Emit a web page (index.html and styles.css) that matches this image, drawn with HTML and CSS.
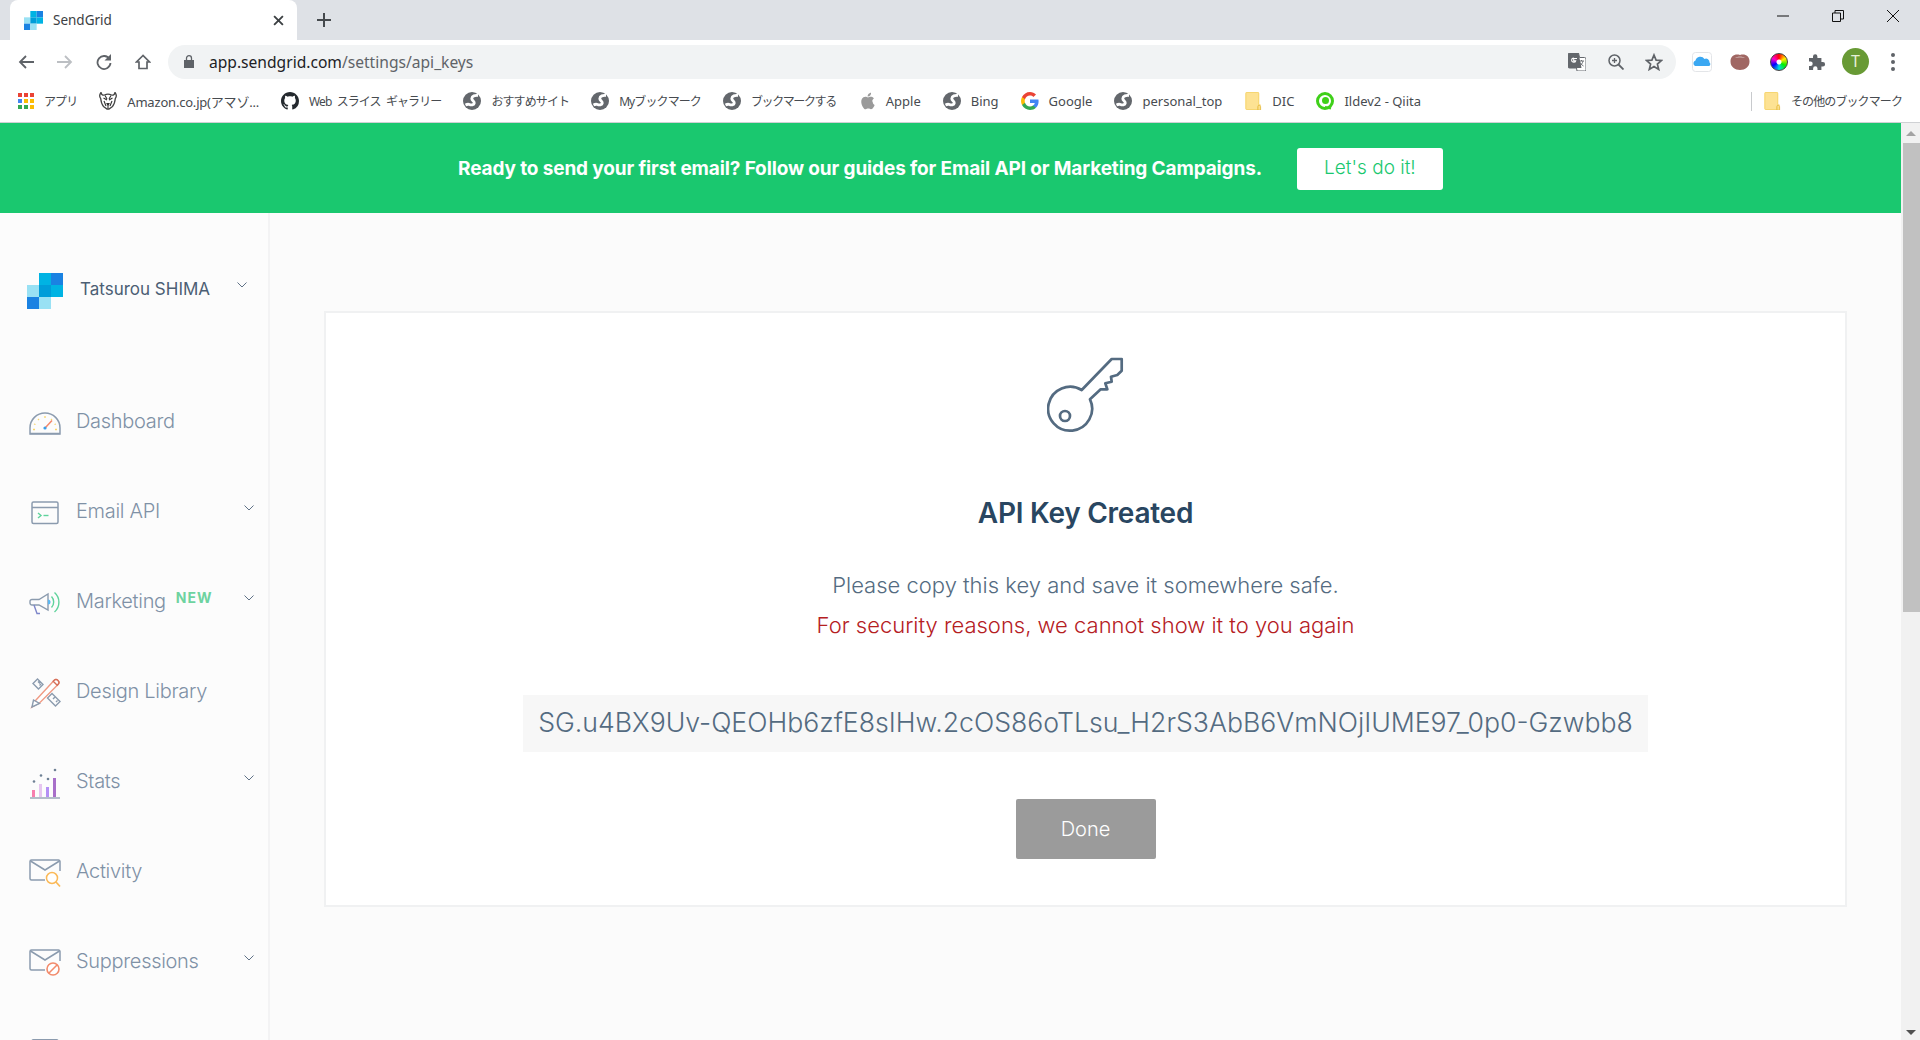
FILE: index.html
```html
<!DOCTYPE html>
<html lang="en">
<head>
    <meta charset="UTF-8">
    <title>SendGrid</title>
    <link rel="stylesheet" href="styles.css">
</head>
<body>
    <svg class="defs" width="0" height="0">
        <symbol id="globe" viewBox="0 0 18 18">
            <circle cx="9" cy="9" r="9" fill="#63676c"/>
            <path d="M15 3.500c-3-.5-6 .5-6.200 3-.2 2.200 2.700 2.500 2.500 4.500-.2 2-3.300 2.200-4.800 1.500-1.200-.5-2.500-.3-4 .5" fill="none" stroke="#fff" stroke-width="2.800"/>
        </symbol>
        <symbol id="folder" viewBox="0 0 16 19">
            <path d="M1.500 0h11.500a1.500 1.500 0 0 1 1.500 1.500V13H16v4.500a1.500 1.500 0 0 1-1.500 1.500h-13A1.500 1.500 0 0 1 0 17.500v-16A1.500 1.500 0 0 1 1.500 0z" fill="#fde293"/>
            <path d="M.5 1.500a1 1 0 0 1 1-1H13a1 1 0 0 1 1 1v16a1 1 0 0 1-1 1H1.500a1 1 0 0 1-1-1z" fill="none" stroke="#f6d56f"/>
            <path d="M13 15.500a1.500 1.500 0 0 1 3 0V19h-3z" fill="none" stroke="#e8c04c" stroke-width="1"/>
        </symbol>
        <symbol id="chev" viewBox="0 0 10 6">
            <path d="M.5.5 5 5 9.500.5" fill="none" stroke="#5f7186" stroke-width="1"/>
        </symbol>
    </svg>

    <div class="tab-strip">
        <div class="tab">
            <svg class="favicon" viewBox="0 0 3 3">
                <rect x="1" width="1" height="1" fill="#00b3e3"/>
                <rect x="2" width="1" height="1" fill="#1a82e2"/>
                <rect y="1" width="1" height="1" fill="#99e1f4"/>
                <rect x="1" y="1" width="1" height="1" fill="#009dd9"/>
                <rect x="2" y="1" width="1" height="1" fill="#00b3e3"/>
                <rect y="2" width="1" height="1" fill="#1a82e2"/>
                <rect x="1" y="2" width="1" height="1" fill="#99e1f4"/>
            </svg>
            <span class="tab-title">SendGrid</span>
            <svg class="tab-close" viewBox="0 0 10 10"><path d="M1 1l8 8M9 1l-8 8" stroke="#3c4043" stroke-width="1.700"/></svg>
        </div>
        <svg class="new-tab" viewBox="0 0 14 14"><path d="M7 0v14M0 7h14" stroke="#45494d" stroke-width="2"/></svg>
        <div class="window-controls">
            <svg viewBox="0 0 12 12"><path d="M0 6h12" stroke="#111" stroke-width="1"/></svg>
            <svg viewBox="0 0 12 12"><path d="M.5 3h8v8.500h-8zM3 3V.5h8.500V9H8.500" fill="none" stroke="#111" stroke-width="1"/></svg>
            <svg viewBox="0 0 12 12"><path d="M0 0l12 12M12 0L0 12" stroke="#111" stroke-width="1"/></svg>
        </div>
    </div>

    <div class="toolbar">
        <div class="nav-buttons">
            <svg viewBox="0 0 16 16"><path d="M16 8H2M8 2L2 8l6 6" fill="none" stroke="#5f6368" stroke-width="1.800"/></svg>
            <svg viewBox="0 0 16 16"><path d="M0 8h14M8 2l6 6-6 6" fill="none" stroke="#bcbfc3" stroke-width="1.800"/></svg>
            <svg viewBox="0 0 16 16"><path d="M13.500 5A6.500 6.500 0 1 0 14.500 9" fill="none" stroke="#5f6368" stroke-width="1.800"/><path d="M15 0v6.500H8.500z" fill="#5f6368"/></svg>
            <svg viewBox="0 0 16 16"><path d="M8 1.500L1.500 8H4v6.500h8V8h2.500z" fill="none" stroke="#5f6368" stroke-width="1.700"/></svg>
        </div>
        <div class="omnibox">
            <svg class="lock" viewBox="0 0 10 13"><path d="M0 5h10v8H0z" fill="#5f6368"/><path d="M2.500 5V3.200a2.500 2.500 0 0 1 5 0V5" fill="none" stroke="#5f6368" stroke-width="1.300"/></svg>
            <span class="url"><span class="url-host">app.sendgrid.com</span>/settings/api_keys</span>
            <svg class="omni-icon omni-translate" viewBox="0 0 18 18">
                <path d="M1.500 0h9l1 4.500H16.500A1.500 1.500 0 0 1 18 6v10.500a1.500 1.500 0 0 1-1.500 1.500H9L8.500 15h-7A1.500 1.500 0 0 1 0 13.500v-12A1.500 1.500 0 0 1 1.500 0z" fill="#fff" stroke="#63676c"/>
                <path d="M1.500 0h9L13.500 15H1.500A1.500 1.500 0 0 1 0 13.500v-12A1.500 1.500 0 0 1 1.500 0z" fill="#63676c"/>
                <path d="M9 5.500H5.700v2.400h2c-.2 1-1 1.400-1.900 1.400a2 2 0 0 1 0-4.300" fill="none" stroke="#fff" stroke-width="1.100"/>
                <path d="M11 8h5M13.500 7v1M15 8c-.5 2.500-2 4-3.500 5M12 9.500c.8 1.500 2 2.800 3.500 3.500" fill="none" stroke="#63676c" stroke-width=".9"/>
            </svg>
            <svg class="omni-icon omni-zoom" viewBox="0 0 16 16"><circle cx="6.500" cy="6.500" r="5.500" fill="none" stroke="#5f6368" stroke-width="1.500"/><path d="M10.500 10.500L15.500 15.500" stroke="#5f6368" stroke-width="1.800"/><path d="M6.500 4v5M4 6.500h5" stroke="#5f6368" stroke-width="1.300"/></svg>
            <svg class="omni-icon omni-star" viewBox="0 0 18 18"><path d="M9 2l2.100 5.100 5.400.4-4.100 3.600 1.300 5.300L9 13.500l-4.700 2.900 1.300-5.300L1.500 7.500l5.400-.4z" fill="none" stroke="#5f6368" stroke-width="1.700"/></svg>
        </div>
        <div class="ext-icons">
            <svg viewBox="0 0 20 20" class="ext-cloud"><rect x=".5" y=".5" width="19" height="19" rx="3" fill="#fff" stroke="#e3e5e8"/><path d="M3 14a3 3 0 0 1 .5-5.500A5 5 0 0 1 12.500 7a3.500 3.500 0 0 1 5 3.500A2 2 0 0 1 17 14z" fill="#3ba8f2"/></svg>
            <svg viewBox="0 0 20 18" class="ext-tomato"><path d="M10 2c5-1.500 9.500 1 9.500 6.500S15 17 10 17 .5 14 .5 8.500 5 .5 10 2z" fill="#a06763"/><path d="M5 5c3-2 7-2 10 0-3-.8-7-.8-10 0z" fill="#cdb0ad"/></svg>
            <div class="ext-wheel"></div>
            <svg viewBox="0 0 18 18" class="ext-puzzle"><path d="M1 5h4V3.500a2.200 2.200 0 0 1 4.400 0V5h4v4h1.500a2.200 2.200 0 0 1 0 4.400h-1.500V17H9.500v-1.500a2.200 2.200 0 0 0-4.400 0V17H1v-4h1.500a2.200 2.200 0 0 0 0-4.400H1z" fill="#5f6368"/></svg>
            <div class="avatar">T</div>
            <div class="kebab"><i></i><i></i><i></i></div>
        </div>
    </div>

    <div class="bookmarks">
        <div class="bm bm-ja">
            <svg class="bm-icon-apps" viewBox="0 0 16 16">
                <rect width="4" height="4" fill="#ea4335"/><rect x="6" width="4" height="4" fill="#ea4335"/><rect x="12" width="4" height="4" fill="#ea4335"/>
                <rect y="6" width="4" height="4" fill="#4285f4"/><rect x="6" y="6" width="4" height="4" fill="#fbbc04"/><rect x="12" y="6" width="4" height="4" fill="#fbbc04"/>
                <rect y="12" width="4" height="4" fill="#34a853"/><rect x="6" y="12" width="4" height="4" fill="#34a853"/><rect x="12" y="12" width="4" height="4" fill="#fbbc04"/>
            </svg>
            <span>アプリ</span>
        </div>
        <div class="bm bm-latin bm-amazon">
            <svg class="bm-icon" viewBox="0 0 18 18"><path d="M2 .5c.5 2.500 2 3 3.500 2.500 2-1 5-1 7 0 1.500.5 3 0 3.500-2.500 1.500 2 1.500 4.500.3 6-.3 3-1 6-2.800 8L10 17H8l-3.500-2.500C2.700 12.500 2 9.500 1.700 6.500.5 5 .5 2.500 2 .5z" fill="#fff" stroke="#444" stroke-width="1.300"/><path d="M4.500 6l3.500 2M13.500 6L10 8M8 11.500h2l-1 2zM9 13.500v3M6 3.500l2 3.500M12 3.500L10 7M5 9l2 5M13 9l-2 5" stroke="#333" fill="none" stroke-width="1.100"/></svg>
            <span>Amazon.co.jp(アマゾ...</span>
        </div>
        <div class="bm bm-ja bm-spaced">
            <svg class="bm-icon" viewBox="0 0 16 16"><path fill="#24292e" d="M8 0C3.580 0 0 3.580 0 8c0 3.540 2.290 6.530 5.470 7.590.4.070.55-.17.55-.38 0-.19-.01-.82-.01-1.490-2.010.37-2.530-.49-2.690-.94-.09-.23-.48-.94-.82-1.130-.28-.15-.68-.52-.01-.53.630-.01 1.080.58 1.230.82.720 1.210 1.870.87 2.330.66.070-.52.280-.87.510-1.070-1.780-.2-3.640-.89-3.640-3.950 0-.87.310-1.590.820-2.150-.08-.2-.36-1.020.08-2.120 0 0 .67-.21 2.200.820.640-.18 1.320-.27 2-.27s1.360.09 2 .27c1.530-1.040 2.200-.82 2.200-.82.440 1.100.160 1.920.08 2.120.510.560.820 1.270.820 2.150 0 3.070-1.870 3.750-3.650 3.950.290.250.540.730.540 1.480 0 1.070-.01 1.930-.01 2.200 0 .210.150.460.550.380A8.010 8.010 0 0 0 16 8c0-4.420-3.580-8-8-8z"/></svg>
            <span>Web スライス ギャラリー</span>
        </div>
        <div class="bm bm-ja"><svg class="bm-icon"><use href="#globe"/></svg><span>おすすめサイト</span></div>
        <div class="bm bm-ja"><svg class="bm-icon"><use href="#globe"/></svg><span>Myブックマーク</span></div>
        <div class="bm bm-ja bm-tight"><svg class="bm-icon"><use href="#globe"/></svg><span>ブックマークする</span></div>
        <div class="bm bm-latin">
            <svg class="bm-icon" viewBox="0 0 16 18"><path fill="#9a9a9a" d="M13.200 9.500c0-2 1.600-3 1.700-3.100-1-1.400-2.400-1.600-2.900-1.600-1.200-.1-2.400.7-3 .7s-1.600-.7-2.600-.7C5 4.800 3.700 5.600 3 6.800c-1.500 2.500-.4 6.300 1 8.400.7 1 1.500 2.100 2.600 2.100 1 0 1.400-.7 2.700-.7s1.600.7 2.700.7 1.800-1 2.500-2c.8-1.200 1.100-2.300 1.100-2.400 0 0-1.900-.8-2-3.400zM11.200 3.400C11.800 2.700 12.200 1.700 12 .7c-.8 0-1.900.6-2.500 1.300-.5.600-1 1.600-.9 2.500 1 .1 1.900-.4 2.600-1.100z"/></svg>
            <span>Apple</span>
        </div>
        <div class="bm bm-latin"><svg class="bm-icon"><use href="#globe"/></svg><span>Bing</span></div>
        <div class="bm bm-latin">
            <svg class="bm-icon" viewBox="0 0 18 18">
                <path d="M17.600 9.200c0-.6-.1-1.200-.2-1.800H9v3.500h4.800c-.2 1.100-.8 2-1.800 2.700v2.200h2.900c1.700-1.600 2.700-3.900 2.700-6.600z" fill="#4285f4"/>
                <path d="M9 18c2.400 0 4.500-.8 5.900-2.200L12 13.600c-.8.500-1.800.9-3 .9-2.300 0-4.300-1.600-5-3.700H1v2.300C2.500 16 5.500 18 9 18z" fill="#34a853"/>
                <path d="M4 10.700c-.4-1.100-.4-2.300 0-3.400V5H1c-1.300 2.500-1.300 5.500 0 8z" fill="#fbbc05"/>
                <path d="M9 3.600c1.300 0 2.500.5 3.400 1.300L15 2.400C13.500.9 11.400 0 9 0 5.500 0 2.500 2 1 5l3 2.300c.7-2.100 2.700-3.700 5-3.700z" fill="#ea4335"/>
            </svg>
            <span>Google</span>
        </div>
        <div class="bm bm-latin"><svg class="bm-icon"><use href="#globe"/></svg><span>personal_top</span></div>
        <div class="bm bm-latin"><svg class="bm-icon"><use href="#folder"/></svg><span>DIC</span></div>
        <div class="bm bm-latin">
            <svg class="bm-icon" viewBox="0 0 18 18"><circle cx="9" cy="9" r="7.500" fill="#fff" stroke="#3fd019" stroke-width="3"/><circle cx="9.500" cy="8.500" r="3.500" fill="#3fd019"/><path d="M9 15l6 1.500" stroke="#3fd019" stroke-width="2"/></svg>
            <span>Ildev2 - Qiita</span>
        </div>
        <div class="bm-other bm-ja">
            <svg class="bm-icon"><use href="#folder"/></svg>
            <span>その他のブックマーク</span>
        </div>
    </div>

    <div class="viewport">
        <div class="page">
            <div class="banner">
                <span class="banner-text">Ready to send your first email? Follow our guides for Email API or Marketing Campaigns.</span>
                <a class="banner-button">Let's do it!</a>
            </div>
            <div class="app">
                <nav class="sidebar">
                    <div class="account">
                        <svg class="logo" viewBox="0 0 3 3">
                            <rect x="1" width="1" height="1" fill="#00b3e3"/>
                            <rect x="2" width="1" height="1" fill="#1a82e2"/>
                            <rect y="1" width="1" height="1" fill="#99e1f4"/>
                            <rect x="1" y="1" width="1" height="1" fill="#009dd9"/>
                            <rect x="2" y="1" width="1" height="1" fill="#00b3e3"/>
                            <rect y="2" width="1" height="1" fill="#1a82e2"/>
                            <rect x="1" y="2" width="1" height="1" fill="#99e1f4"/>
                        </svg>
                        <span class="account-name">Tatsurou SHIMA</span>
                        <svg class="chev chev-account"><use href="#chev"/></svg>
                    </div>
                    <ul class="nav">
                        <li class="nav-item">
                            <svg class="nav-icon" viewBox="0 0 32 24">
                                <path d="M1 23v-6a15 15 0 0 1 30 0v6z" fill="none" stroke="#8b9bae" stroke-width="1.500"/>
                                <path d="M1 22.500h30" stroke="#8b9bae" stroke-width="1.500"/>
                                <path d="M16 5v2M9 8l1 1M23 8l-1 1M5 13l1.500.5M27 13l-1.500.5M4 18.500h2M26 18.500h2" stroke="#f8d66d" stroke-width="1.300"/>
                                <path d="M16.500 16.500L23 9.500" stroke="#f4876a" stroke-width="1.500"/>
                                <circle cx="16" cy="17" r="1.600" fill="#3b9ee8"/>
                            </svg>
                            <span class="nav-label">Dashboard</span>
                        </li>
                        <li class="nav-item">
                            <svg class="nav-icon" viewBox="0 0 32 24">
                                <rect x="3" y="1" width="26" height="21.500" rx="1.500" fill="none" stroke="#8b9bae" stroke-width="1.500"/>
                                <path d="M3 6.500h26" stroke="#8b9bae" stroke-width="1.500"/>
                                <path d="M9 12l3 2.500-3 2.500" fill="none" stroke="#5fd39c" stroke-width="1.400"/>
                                <path d="M14.500 14.500h5" stroke="#5fd39c" stroke-width="1.400"/>
                            </svg>
                            <span class="nav-label">Email API</span>
                            <svg class="chev"><use href="#chev"/></svg>
                        </li>
                        <li class="nav-item">
                            <svg class="nav-icon" viewBox="0 0 32 24">
                                <path d="M3 8.500h7L19 3v16l-9-5H3a2 2 0 0 1-2-2v-1.500a2 2 0 0 1 2-2z" fill="none" stroke="#8b9bae" stroke-width="1.400"/>
                                <path d="M5 14l3 8.500h3" fill="none" stroke="#7e86c9" stroke-width="1.400"/>
                                <path d="M19 8.500a2.500 2.500 0 0 1 0 5z" fill="#5cb8f2"/>
                                <path d="M22.500 5.500a8 8 0 0 1 0 11M25.500 1.500a13 13 0 0 1 0 19.500" fill="none" stroke="#5fd39c" stroke-width="1.400"/>
                            </svg>
                            <span class="nav-label">Marketing</span>
                            <span class="nav-new">NEW</span>
                            <svg class="chev"><use href="#chev"/></svg>
                        </li>
                        <li class="nav-item">
                            <svg class="nav-icon nav-icon-tall" viewBox="0 0 32 32">
                                <path d="M4 6.500L8.500 2 14 7.500 9.500 12zM18.500 21L23 16.500 31 24.500 26.500 29zM9 4.500l2 2M12 7l-1.500 1.500M24 22l2-2M27 25l1.500-1.500" fill="none" stroke="#8b9bae" stroke-width="1.400"/>
                                <path d="M7 23L25 3.500a2.800 2.800 0 0 1 4 4L10.500 26 3 30z" fill="#fff" stroke="#ef9a84" stroke-width="1.400"/>
                                <path d="M3 30l1.500-7 6 3.500z" fill="#fff" stroke="#8b9bae" stroke-width="1.400"/>
                                <path d="M25 3.500a2.800 2.800 0 0 1 4 4l-.8.800-4-4z" fill="#fff" stroke="#d6705a" stroke-width="1.400"/>
                            </svg>
                            <span class="nav-label">Design Library</span>
                        </li>
                        <li class="nav-item">
                            <svg class="nav-icon nav-icon-tall" viewBox="0 0 32 32">
                                <rect x="3" y="23" width="3" height="7" fill="#f77fae"/>
                                <rect x="10" y="17" width="3" height="13" fill="#e6c6f0"/>
                                <rect x="17" y="20" width="3" height="10" fill="#b490f5"/>
                                <rect x="24" y="11" width="3" height="19" fill="#a86fc9"/>
                                <path d="M1 31h30" stroke="#8b9bae" stroke-width="1.300"/>
                                <circle cx="5" cy="14.500" r="1.300" fill="#6f8195"/><circle cx="12" cy="8.500" r="1.300" fill="#6f8195"/><circle cx="19" cy="12" r="1.300" fill="#6f8195"/><circle cx="26" cy="3" r="1.300" fill="#6f8195"/>
                            </svg>
                            <span class="nav-label">Stats</span>
                            <svg class="chev"><use href="#chev"/></svg>
                        </li>
                        <li class="nav-item">
                            <svg class="nav-icon nav-icon-tall" viewBox="0 0 32 28">
                                <path d="M16 21H2.500A1.500 1.500 0 0 1 1 19.500v-17A1.500 1.500 0 0 1 2.500 1h27A1.500 1.500 0 0 1 31 2.500V12" fill="none" stroke="#8b9bae" stroke-width="1.500"/>
                                <path d="M1.500 2L16 11 30.500 2" fill="none" stroke="#8b9bae" stroke-width="1.500"/>
                                <circle cx="23" cy="19" r="5.500" fill="#fff" stroke="#fbb957" stroke-width="1.500"/>
                                <path d="M27 23l4 4.500" stroke="#fbb957" stroke-width="1.700"/>
                            </svg>
                            <span class="nav-label">Activity</span>
                        </li>
                        <li class="nav-item">
                            <svg class="nav-icon nav-icon-tall" viewBox="0 0 32 28">
                                <path d="M16 21H2.500A1.500 1.500 0 0 1 1 19.500v-17A1.500 1.500 0 0 1 2.500 1h27A1.500 1.500 0 0 1 31 2.500V12" fill="none" stroke="#8b9bae" stroke-width="1.500"/>
                                <path d="M1.500 2L16 11 30.500 2" fill="none" stroke="#8b9bae" stroke-width="1.500"/>
                                <circle cx="24" cy="20" r="6" fill="#fff" stroke="#f28b6c" stroke-width="1.600"/>
                                <path d="M20 24l8-8" stroke="#f28b6c" stroke-width="1.600"/>
                            </svg>
                            <span class="nav-label">Suppressions</span>
                            <svg class="chev"><use href="#chev"/></svg>
                        </li>
                        <li class="nav-item">
                            <svg class="nav-icon nav-icon-flush" viewBox="0 0 32 24"><rect x="3" y=".8" width="26" height="21" rx="1.500" fill="none" stroke="#8b9bae" stroke-width="1.500"/></svg>
                        </li>
                    </ul>
                </nav>
                <main class="content">
                    <div class="card">
                        <svg class="key-icon" viewBox="0 0 78 78">
                            <path d="M34.700 33L64.700 2H74.700V13.700L70.300 18L64 19.700L64.700 24.700L58.300 26.300L60.300 32.300H53.700L43 42.300A22 22 0 1 1 34.700 33Z" fill="none" stroke="#546b81" stroke-width="2.700" stroke-linejoin="round"/>
                            <circle cx="18" cy="59" r="5" fill="none" stroke="#546b81" stroke-width="2.700"/>
                        </svg>
                        <h1 class="card-title">API Key Created</h1>
                        <p class="card-text">Please copy this key and save it somewhere safe.</p>
                        <p class="card-warning">For security reasons, we cannot show it to you again</p>
                        <div class="key-value">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</div>
                        <button class="done-button">Done</button>
                    </div>
                </main>
            </div>
        </div>
        <div class="scrollbar">
            <div class="arrow-up"></div>
            <div class="thumb"></div>
            <div class="arrow-down"></div>
        </div>
    </div>
</body>
</html>
```

FILE: styles.css
```css
* {
    margin: 0;
    padding: 0;
    box-sizing: border-box;
}
html, body {
    height: 100%;
    overflow: hidden;
}
body {
    display: flex;
    flex-direction: column;
    font-family: 'Inter', 'Noto Sans CJK JP', sans-serif;
    background-color: #fff;
}
.defs {
    position: absolute;
}

/* browser chrome */
.tab-strip {
    height: 40px;
    flex: none;
    background-color: #dee1e6;
    display: flex;
    align-items: center;
}
.tab {
    width: 287px;
    height: 40px;
    margin-left: 10px;
    background-color: #fff;
    border-radius: 8px 8px 0 0;
    display: flex;
    align-items: center;
    padding-left: 14px;
}
.favicon {
    width: 19px;
    height: 19px;
}
.tab-title {
    font: 13.5px 'Noto Sans', sans-serif;
    color: #3c4043;
    margin-left: 10px;
    flex: 1;
}
.tab-close {
    width: 11px;
    height: 11px;
    margin-right: 13px;
}
.new-tab {
    width: 14px;
    height: 14px;
    margin-left: 20px;
}
.window-controls {
    margin-left: auto;
    display: flex;
    gap: 43px;
    padding-right: 21px;
    margin-top: -8px;
}
.window-controls svg {
    width: 12px;
    height: 12px;
}
.toolbar {
    height: 43px;
    flex: none;
    display: flex;
    align-items: center;
    background-color: #fff;
}
.nav-buttons {
    display: flex;
    gap: 23px;
    padding-left: 18px;
    width: 168px;
    flex: none;
}
.nav-buttons svg {
    width: 16px;
    height: 16px;
}
.omnibox {
    width: 1508px;
    height: 34px;
    flex: none;
    background-color: #f1f3f4;
    border-radius: 17px;
    display: flex;
    align-items: center;
    padding-left: 16px;
    padding-right: 13px;
}
.lock {
    width: 10px;
    height: 13px;
}
.url {
    font: 15.6px 'Noto Sans', sans-serif;
    color: #5f6368;
    margin-left: 15px;
    flex: 1;
}
.url-host {
    color: #202124;
}
.omni-icon {
    flex: none;
}
.omni-translate {
    width: 18px;
    height: 18px;
}
.omni-zoom {
    width: 16px;
    height: 16px;
    margin-left: 22px;
}
.omni-star {
    width: 18px;
    height: 18px;
    margin-left: 21px;
}
.ext-icons {
    display: flex;
    align-items: center;
    padding-left: 16px;
}
.ext-cloud {
    width: 20px;
    height: 20px;
}
.ext-tomato {
    width: 20px;
    height: 18px;
    margin-left: 18px;
}
.ext-wheel {
    width: 18px;
    height: 18px;
    margin-left: 20px;
    border-radius: 50%;
    background: radial-gradient(circle, #fff 0 2px, transparent 3px), conic-gradient(#ff0000, #ffee00, #00ee00, #00dddd, #0000ff, #ff00cc, #ff0000);
    border: 1px solid #444;
}
.ext-puzzle {
    width: 18px;
    height: 18px;
    margin-left: 20px;
}
.avatar {
    width: 27px;
    height: 27px;
    margin-left: 16px;
    border-radius: 50%;
    background-color: #689a35;
    color: #e6f0d8;
    font: 16px/27px 'Noto Sans', sans-serif;
    text-align: center;
}
.kebab {
    margin-left: 22px;
    display: flex;
    flex-direction: column;
    gap: 3px;
}
.kebab i {
    width: 4px;
    height: 4px;
    border-radius: 50%;
    background-color: #5f6368;
}
.bookmarks {
    height: 40px;
    flex: none;
    display: flex;
    align-items: center;
    padding-left: 18px;
    padding-bottom: 3px;
    background-color: #fff;
    border-bottom: 1px solid #cfd1d4;
    font-family: 'Noto Sans', 'Noto Sans CJK JP', sans-serif;
    color: #474b50;
    gap: 22px;
}
.bm {
    display: flex;
    align-items: center;
    gap: 10px;
    white-space: nowrap;
}
.bm-latin {
    font-size: 13px;
}
.bm-amazon {
    letter-spacing: -0.2px;
}
.bm-ja {
    font-size: 12px;
    letter-spacing: -0.9px;
}
.bm-spaced {
    word-spacing: 3px;
}
.bm-tight {
    letter-spacing: -1.4px;
}
.bm-icon-apps {
    width: 16px;
    height: 16px;
}
.bm-icon {
    width: 18px;
    height: 18px;
    flex: none;
}
.bm-other {
    margin-left: auto;
    margin-right: 18px;
    display: flex;
    align-items: center;
    gap: 10px;
    padding-left: 11px;
    border-left: 1px solid #c8cacd;
    height: 19px;
}

/* page */
.viewport {
    flex: 1;
    display: flex;
    min-height: 0;
}
.page {
    flex: 1;
    display: flex;
    flex-direction: column;
    min-width: 0;
}
.banner {
    height: 90px;
    flex: none;
    background-color: #1ac86f;
    display: flex;
    align-items: center;
    justify-content: center;
    gap: 35px;
}
.banner-text {
    color: #fff;
    font-size: 19px;
    font-weight: 700;
    letter-spacing: -0.13px;
}
.banner-button {
    width: 146px;
    height: 42px;
    margin-top: 2px;
    background-color: #fff;
    color: #1ac86f;
    border-radius: 3px;
    font-size: 19px;
    font-weight: 300;
    line-height: 40px;
    text-align: center;
}
.app {
    flex: 1;
    display: flex;
    min-height: 0;
    background-color: #fbfbfb;
}
.sidebar {
    width: 270px;
    flex: none;
    border-right: 2px solid #f3f3f4;
    background-color: #fcfcfc;
    overflow: hidden;
}
.account {
    display: flex;
    align-items: center;
    height: 36px;
    margin-top: 60px;
    padding-left: 27px;
    position: relative;
}
.logo {
    width: 36px;
    height: 36px;
}
.account-name {
    margin-left: 17px;
    margin-bottom: 4px;
    font-size: 17px;
    color: #4c5f74;
}
.chev {
    width: 10px;
    height: 6px;
    position: absolute;
    right: 14px;
    top: 50%;
    margin-top: -6px;
}
.chev-account {
    right: 21px;
    margin-top: -9px;
}
.nav {
    list-style: none;
    margin-top: 67px;
}
.nav-item {
    height: 90px;
    display: flex;
    align-items: center;
    padding-left: 29px;
    position: relative;
}
.nav-icon {
    width: 32px;
    height: 24px;
    flex: none;
    margin-top: 4px;
}
.nav-icon-tall {
    height: 32px;
}
.nav-icon-flush {
    margin-top: 0;
}
.nav-label {
    margin-left: 15px;
    font-size: 20px;
    font-weight: 300;
    letter-spacing: -0.3px;
    color: #7f91a6;
}
.nav-new {
    margin-left: 10px;
    margin-top: -7px;
    font-size: 14px;
    font-weight: 700;
    letter-spacing: 1px;
    color: #6ed3a0;
}
.content {
    flex: 1;
    padding: 98px 54px 0;
    min-width: 0;
}
.card {
    height: 596px;
    background-color: #fff;
    border: 2px solid #f0f1f2;
    display: flex;
    flex-direction: column;
    align-items: center;
    padding-top: 44px;
}
.key-icon {
    width: 78px;
    height: 78px;
}
.card-title {
    font-size: 28px;
    font-weight: 600;
    letter-spacing: -0.25px;
    color: #294661;
    margin-top: 60px;
    line-height: 36px;
}
.card-text {
    font-size: 22px;
    font-weight: 300;
    color: #546b81;
    margin-top: 38px;
    line-height: 32px;
}
.card-warning {
    font-size: 22px;
    font-weight: 300;
    color: #b5201f;
    margin-top: 8px;
    line-height: 32px;
}
.key-value {
    width: 1125px;
    height: 57px;
    background-color: #f7f7f7;
    color: #546b81;
    font-size: 26.65px;
    font-weight: 300;
    line-height: 54px;
    text-align: center;
    margin-top: 54px;
    white-space: nowrap;
}
.done-button {
    width: 140px;
    height: 60px;
    margin-top: 47px;
    background-color: #9b9b9b;
    color: #fff;
    border: none;
    border-radius: 2px;
    font: 300 20px 'Inter', sans-serif;
}

/* scrollbar */
.scrollbar {
    width: 19px;
    flex: none;
    background-color: #f1f1f1;
    display: flex;
    flex-direction: column;
    align-items: center;
}
.arrow-up, .arrow-down {
    width: 0;
    height: 0;
    border-left: 5px solid transparent;
    border-right: 5px solid transparent;
}
.arrow-up {
    border-bottom: 5px solid #a3a3a3;
    margin-top: 8px;
}
.arrow-down {
    border-top: 5px solid #505050;
    margin-top: auto;
    margin-bottom: 5px;
}
.thumb {
    width: 17px;
    height: 469px;
    margin-top: 7px;
    align-self: flex-end;
    background-color: #c1c1c1;
}
```
